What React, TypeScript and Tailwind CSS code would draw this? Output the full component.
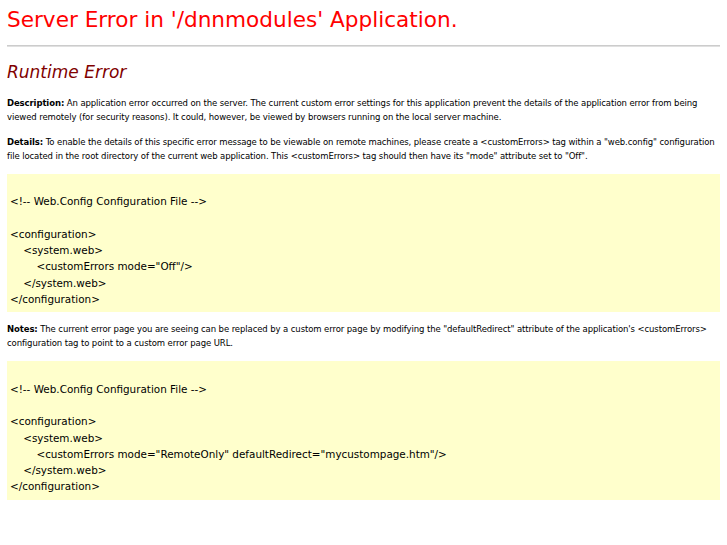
export default function App() {
  const code1 = `
<!-- Web.Config Configuration File -->

<configuration>
    <system.web>
        <customErrors mode="Off"/>
    </system.web>
</configuration>`;
  const code2 = `
<!-- Web.Config Configuration File -->

<configuration>
    <system.web>
        <customErrors mode="RemoteOnly" defaultRedirect="mycustompage.htm"/>
    </system.web>
</configuration>`;
  return (
    <div className="bg-white min-h-[545px] px-[7px] pt-[6px] text-black" style={{ fontFamily: '"DejaVu Sans", Verdana, sans-serif' }}>
      <h1 className="text-[21.6px] leading-[28px] text-[#ff0000]">Server Error in '/dnnmodules' Application.</h1>
      <hr className="mt-[11px] border-0 h-[2px] bg-[#e0e0e0] border-t border-[#cccccc]" />
      <h2 className="mt-[14px] text-[17px] leading-[22px] italic text-[#800000]">Runtime Error</h2>
      <p className="mt-[13px] text-[8.5px] leading-[14px] whitespace-nowrap tracking-[-0.1px]">
        <b>Description:</b> An application error occurred on the server. The current custom error settings for this application prevent the details of the application error from being<br />
        viewed remotely (for security reasons). It could, however, be viewed by browsers running on the local server machine.
      </p>
      <p className="mt-[11px] text-[8.5px] leading-[14px] whitespace-nowrap tracking-[-0.1px]">
        <b>Details:</b> To enable the details of this specific error message to be viewable on remote machines, please create a &lt;customErrors&gt; tag within a "web.config" configuration<br />
        file located in the root directory of the current web application. This &lt;customErrors&gt; tag should then have its "mode" attribute set to "Off".
      </p>
      <pre className="mt-[11px] bg-[#ffffcc] px-[3px] pt-[3px] pb-[5px] text-[10.4px] leading-[16.3px] whitespace-pre" style={{ fontFamily: '"DejaVu Sans", sans-serif' }}>{code1}</pre>
      <p className="mt-[10px] text-[8.5px] leading-[14px] whitespace-nowrap tracking-[-0.1px]">
        <b>Notes:</b> The current error page you are seeing can be replaced by a custom error page by modifying the "defaultRedirect" attribute of the application's &lt;customErrors&gt;<br />
        configuration tag to point to a custom error page URL.
      </p>
      <pre className="mt-[11px] bg-[#ffffcc] px-[3px] pt-[3px] pb-[5px] text-[10.4px] leading-[16.3px] whitespace-pre" style={{ fontFamily: '"DejaVu Sans", sans-serif' }}>{code2}</pre>
    </div>
  );
}
